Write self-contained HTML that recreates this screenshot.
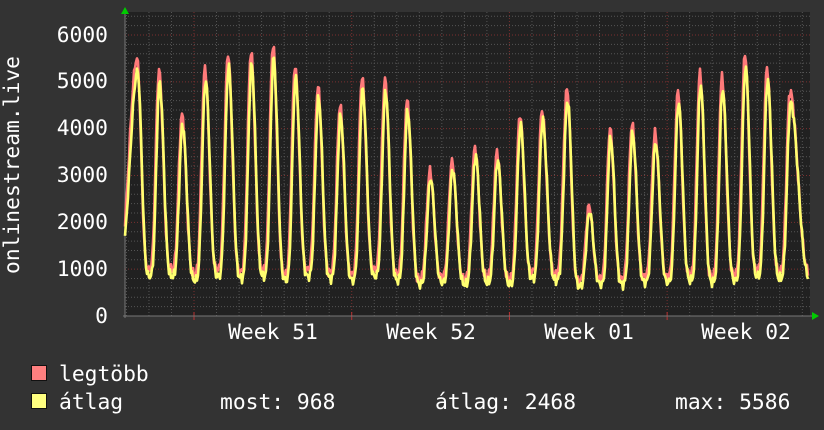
<!DOCTYPE html><html><head><meta charset="utf-8"><style>
html,body{margin:0;padding:0;background:#333;width:824px;height:430px;overflow:hidden}
svg{display:block}
text{font-family:"DejaVu Sans Mono","Liberation Mono",monospace;font-size:21.3px;fill:#fff}
</style></head><body>
<svg id="g" width="824" height="430" viewBox="0 0 824 430">
<rect x="0" y="0" width="824" height="430" fill="#333"/>
<rect x="125" y="12" width="685" height="304" fill="#212121"/>
<g id="grid"></g>
<g id="lines"></g>
<polygon points="121,14 125,7 129,14" fill="#0c0"/>
<polygon points="812,312 819,316 812,320" fill="#0c0"/>
<g text-anchor="end">
<text x="108" y="323">0</text>
<text x="108" y="276">1000</text>
<text x="108" y="229">2000</text>
<text x="108" y="182">3000</text>
<text x="108" y="135">4000</text>
<text x="108" y="88">5000</text>
<text x="108" y="42">6000</text>
</g>
<text transform="translate(19,165) rotate(-90)" text-anchor="middle">onlinestream.live</text>
<g text-anchor="middle">
<text x="273" y="339">Week 51</text>
<text x="431" y="339">Week 52</text>
<text x="589" y="339">Week 01</text>
<text x="746" y="339">Week 02</text>
</g>
<rect x="31.5" y="365.5" width="15" height="15" fill="#ff8080" stroke="#111"/>
<rect x="31.5" y="393.5" width="15" height="15" fill="#ffff80" stroke="#111"/>
<text x="59" y="381">legtöbb</text>
<text x="59" y="409">átlag</text>
<text x="220" y="409">most: 968</text>
<text x="435" y="409">átlag: 2468</text>
<text x="675" y="409">max: 5586</text>
</svg>
<script>
var NS="http://www.w3.org/2000/svg";
function el(p,t,a){var e=document.createElementNS(NS,t);for(var k in a)e.setAttribute(k,a[k]);p.appendChild(e);return e;}
var grid=document.getElementById('grid'),lines=document.getElementById('lines');
function Y(v){return 316-v*0.04683;}
for(var v=200;v<=6400;v+=200){var y=Y(v);if(y<12)break;var maj=v%1000==0;
el(grid,'line',{x1:125,x2:810,y1:y,y2:y,stroke:maj?'#7a3030':'#555','stroke-dasharray':'1,2','stroke-width':1});}
for(var k=-3;k<28;k++){var x=194+k*22.53;if(x<126||x>809)continue;var maj=(k%7==0);
el(grid,'line',{x1:x,x2:x,y1:12,y2:316,stroke:maj?'#7a3030':'#555','stroke-dasharray':'1,2','stroke-width':1});
if(maj)el(grid,'line',{x1:x,x2:x,y1:312,y2:320,stroke:'#b33','stroke-width':1});}
el(grid,'line',{x1:125,x2:125,y1:12,y2:318,stroke:'#777','stroke-width':1});
el(grid,'line',{x1:123,x2:812,y1:316,y2:316,stroke:'#777','stroke-width':1});
var pk=[[137,5500],[159,5250],[182,4300],[205,5300],[228,5600],[251,5650],[273,5800],[295,5350],[318,4900],[340,4500],[362,5100],[385,5050],[407,4600],[430,3100],[452,3300],[475,3600],[497,3500],[520,4300],[542,4400],[567,4850],[589,2350],[610,4000],[632,4100],[655,3900],[678,4800],[700,5200],[722,5100],[745,5600],[767,5300],[790,4800]];
var mins=[1050,1000,1000,900,1000,950,1000,900,1000,950,900,1000,900,800,850,800,850,800,950,900,750,800,800,850,850,900,850,900,1000,950,900];
var E=1.9;
function val(x,scale,off){
 var i=0;while(i<pk.length-1&&pk[i+1][0]<=x)i++;
 var a,b,p;
 if(x<pk[0][0]){a=pk[0];p=(x-(a[0]-22.5))/22.5;var mn=mins[0];var f=Math.pow(0.5-0.5*Math.cos(Math.PI*p),E);return mn*off+(a[1]*scale-mn*off)*f;}
 if(i>=pk.length-1){a=pk[pk.length-1];p=(x-a[0])/22.5;var mn=mins[30];var f=Math.pow(0.5+0.5*Math.cos(Math.PI*Math.min(p,1)),E);return mn*off+(a[1]*scale-mn*off)*f;}
 a=pk[i];b=pk[i+1];p=(x-a[0])/(b[0]-a[0]);
 var mn=mins[i+1]*off;
 var t=0.55,v;
 if(p<t){var f=Math.pow(0.5+0.5*Math.cos(Math.PI*p/t),E);v=mn+(a[1]*scale-mn)*f;}
 else{var f=Math.pow(0.5-0.5*Math.cos(Math.PI*(p-t)/(1-t)),E);v=mn+(b[1]*scale-mn)*f;}
 return v;
}
function jit(x,s){return Math.sin(x*1.7+s)*70+Math.sin(x*3.1+s*2)*50;}
function poly(scale,off,col,s,shift){var pts=[];for(var x=125;x<=808;x++){var v=val(x-shift,scale,off)+jit(x,s);pts.push(x+','+Y(v).toFixed(1));}
el(lines,'polyline',{points:pts.join(' '),fill:'none',stroke:col,'stroke-width':2.6,'stroke-linejoin':'round'});}
poly(1,1.0,'#ff7a7a',0,0);
poly(0.95,0.85,'#ffff70',1.3,0.6);
</script>
</body></html>
